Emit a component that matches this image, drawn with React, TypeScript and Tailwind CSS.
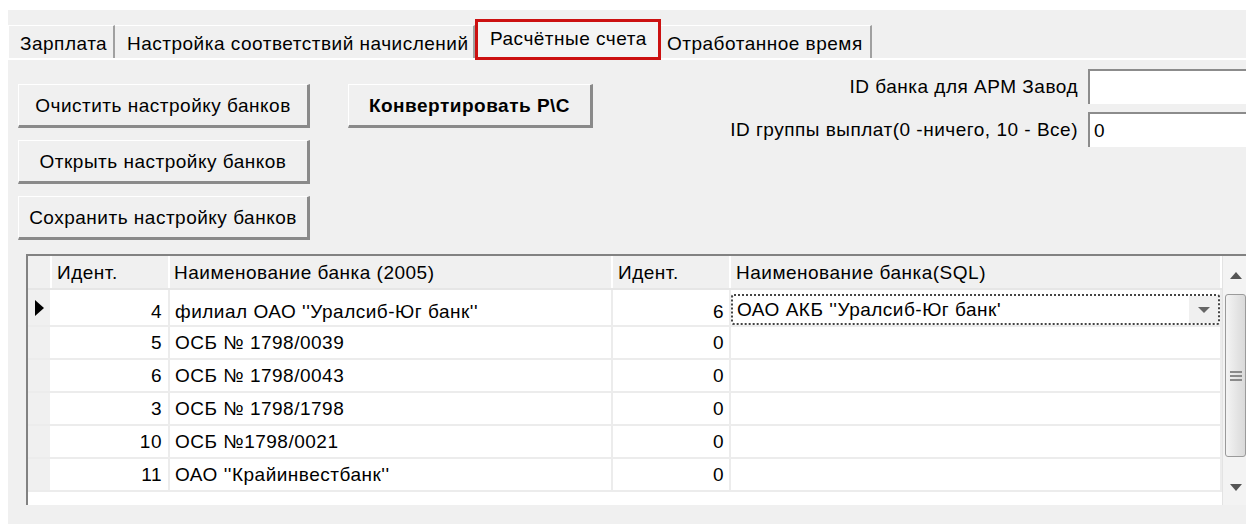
import type { ReactNode } from 'react';

type Bank = {
  id: number;
  name: string;
  sqlId: number;
  sqlName: string;
};

const banks: Bank[] = [
  { id: 4, name: 'филиал ОАО \'\'Уралсиб-Юг банк\'\'', sqlId: 6, sqlName: 'ОАО АКБ \'\'Уралсиб-Юг банк\'' },
  { id: 5, name: 'ОСБ № 1798/0039', sqlId: 0, sqlName: '' },
  { id: 6, name: 'ОСБ № 1798/0043', sqlId: 0, sqlName: '' },
  { id: 3, name: 'ОСБ № 1798/1798', sqlId: 0, sqlName: '' },
  { id: 10, name: 'ОСБ №1798/0021', sqlId: 0, sqlName: '' },
  { id: 11, name: 'ОАО \'\'Крайинвестбанк\'\'', sqlId: 0, sqlName: '' },
];

const Button = ({ children, bold, width }: { children: ReactNode; bold?: boolean; width: string }) => (
  <button
    className={`${width} h-[44px] bg-[#f0f0f0] border-t border-l border-t-white border-l-white border-b-[3px] border-r-[3px] border-b-[#8a8a8a] border-r-[#8a8a8a] flex items-center justify-center ${
      bold ? 'font-bold' : ''
    }`}
  >
    {children}
  </button>
);

const Tab = ({ children, width }: { children: ReactNode; width: string }) => (
  <div className={`${width} h-[33px] flex items-center pt-[3px] border-t border-t-white border-r-2 border-r-[#a0a0a0]`}>
    {children}
  </div>
);

const Field = ({ label, value }: { label: string; value?: string }) => (
  <div className="flex items-center gap-[10px]">
    <span>{label}</span>
    <div className="w-[175px] h-[35px] bg-white border-t-2 border-l-2 border-t-[#8c8c8c] border-l-[#8c8c8c] flex items-center pl-[4px]">
      {value}
    </div>
  </div>
);

const cols = {
  ind: 'w-[24px]',
  id: 'w-[118px]',
  name: 'w-[443px]',
  sqlId: 'w-[118px]',
  sqlName: 'w-[491px]',
};

const ScrollBar = () => (
  <div className="w-[26px] bg-[#f3f3f3] border-l border-l-[#e3e3e3] flex flex-col">
    <div className="h-[38px] flex items-center justify-center">
      <svg width="12" height="7" viewBox="0 0 12 7">
        <path d="M0 7 L6 0 L12 7 Z" fill="#555" />
      </svg>
    </div>
    <div className="h-[163px] mx-[2px] rounded-[3px] border border-[#9a9a9a] bg-gradient-to-r from-[#f4f4f4] to-[#d9d9d9] flex items-center justify-center">
      <div className="flex flex-col gap-[2px] w-[12px]">
        <div className="h-[2px] bg-[#8a8a8a]" />
        <div className="h-[2px] bg-[#8a8a8a]" />
        <div className="h-[2px] bg-[#8a8a8a]" />
      </div>
    </div>
    <div className="flex-1 flex items-end justify-center pb-[14px]">
      <svg width="12" height="7" viewBox="0 0 12 7">
        <path d="M0 0 L6 7 L12 0 Z" fill="#555" />
      </svg>
    </div>
  </div>
);

const BankGrid = () => (
  <div className="ml-[18px] mt-[14px] w-[1240px] h-[251px] bg-white border-t-2 border-l-2 border-t-[#828282] border-l-[#828282] flex">
    <div className="flex flex-col">
      {/* header */}
      <div className="flex h-[34px] bg-[#f0f0f0] border-b-2 border-b-[#e6e6e6]">
        <div className={`${cols.ind} border-r-2 border-r-white`} />
        <div className={`${cols.id} border-r-2 border-r-white flex items-center pl-[5px]`}>Идент.</div>
        <div className={`${cols.name} border-r-2 border-r-white flex items-center pl-[4px]`}>Наименование банка (2005)</div>
        <div className={`${cols.sqlId} border-r-2 border-r-white flex items-center pl-[5px]`}>Идент.</div>
        <div className={`${cols.sqlName} border-r-2 border-r-white flex items-center pl-[5px]`}>Наименование банка(SQL)</div>
      </div>
      {banks.map((b, i) => {
        const first = i === 0;
        return (
          <div key={b.id} className={`flex border-b-2 border-b-[#ececec] ${first ? 'h-[37px]' : 'h-[33px]'}`}>
            <div className={`${cols.ind} bg-[#f0f0f0] border-r-2 border-r-white flex items-center justify-center`}>
              {first && (
                <svg width="9" height="16" viewBox="0 0 9 16">
                  <path d="M0 0 L9 8 L0 16 Z" fill="#000" />
                </svg>
              )}
            </div>
            <div className={`${cols.id} border-r-2 border-r-[#ececec] flex justify-end pr-[6px] ${first ? 'items-end pb-[4px]' : 'items-center'}`}>
              {b.id}
            </div>
            <div className={`${cols.name} border-r-2 border-r-[#ececec] flex pl-[5px] whitespace-pre ${first ? 'items-end pb-[4px]' : 'items-center'}`}>
              {b.name}
            </div>
            <div className={`${cols.sqlId} border-r-2 border-r-[#ececec] flex justify-end pr-[5px] ${first ? 'items-end pb-[4px]' : 'items-center'}`}>
              {b.sqlId}
            </div>
            <div className={`${cols.sqlName} border-r-2 border-r-[#ececec] flex ${first ? 'items-end' : 'items-center'}`}>
              {first && (
                <div className="w-full h-[31px] border-2 border-dotted border-[#444] rounded-[3px] flex items-center pl-[4px] whitespace-pre">
                  <span className="flex-1">{b.sqlName}</span>
                  <div className="w-[29px] h-full bg-[#f0f0f0] flex items-center justify-center">
                    <svg width="12" height="6" viewBox="0 0 12 6">
                      <path d="M0 0 L6 6 L12 0 Z" fill="#666" />
                    </svg>
                  </div>
                </div>
              )}
            </div>
          </div>
        );
      })}
    </div>
    <ScrollBar />
  </div>
);

export default function App() {
  return (
    <div className="w-[1246px] h-[524px] overflow-hidden bg-white pl-[8px] pt-[10px] text-[19px] tracking-[0.5px] leading-none text-black font-['Liberation_Sans',Arial,sans-serif]">
      <div className="w-[1270px] h-[514px] bg-[#f0f0f0]">
        {/* tab strip */}
        <div className="h-[50px] flex items-end border-b-2 border-b-white">
          <Tab width="w-[107px] pl-[11px] border-l border-l-white">Зарплата</Tab>
          <Tab width="w-[360px] pl-[12px]">Настройка соответствий начислений</Tab>
          <div className="w-[186px] h-[41px] mb-[-2px] border-[3px] border-[#cc1111] bg-[#f4f4f4] flex items-center pl-[12px] pb-[2px]">
            Расчётные счета
          </div>
          <Tab width="w-[211px] pl-[6px]">Отработанное время</Tab>
        </div>

        {/* buttons and settings */}
        <div className="flex pt-[9px] pr-[15px]">
          <div className="ml-[10px] mt-[15px] flex flex-col gap-[12px]">
            <Button width="w-[292px]">Очистить настройку банков</Button>
            <Button width="w-[292px]">Открыть настройку банков</Button>
            <Button width="w-[292px]">Сохранить настройку банков</Button>
          </div>
          <div className="ml-[38px] mt-[15px]">
            <Button width="w-[245px]" bold>
              Конвертировать Р\С
            </Button>
          </div>
          <div className="ml-auto flex flex-col items-end gap-[8px]">
            <Field label="ID банка для АРМ Завод" />
            <Field label="ID группы выплат(0 -ничего, 10 - Все)" value="0" />
          </div>
        </div>

        <BankGrid />
      </div>
    </div>
  );
}
